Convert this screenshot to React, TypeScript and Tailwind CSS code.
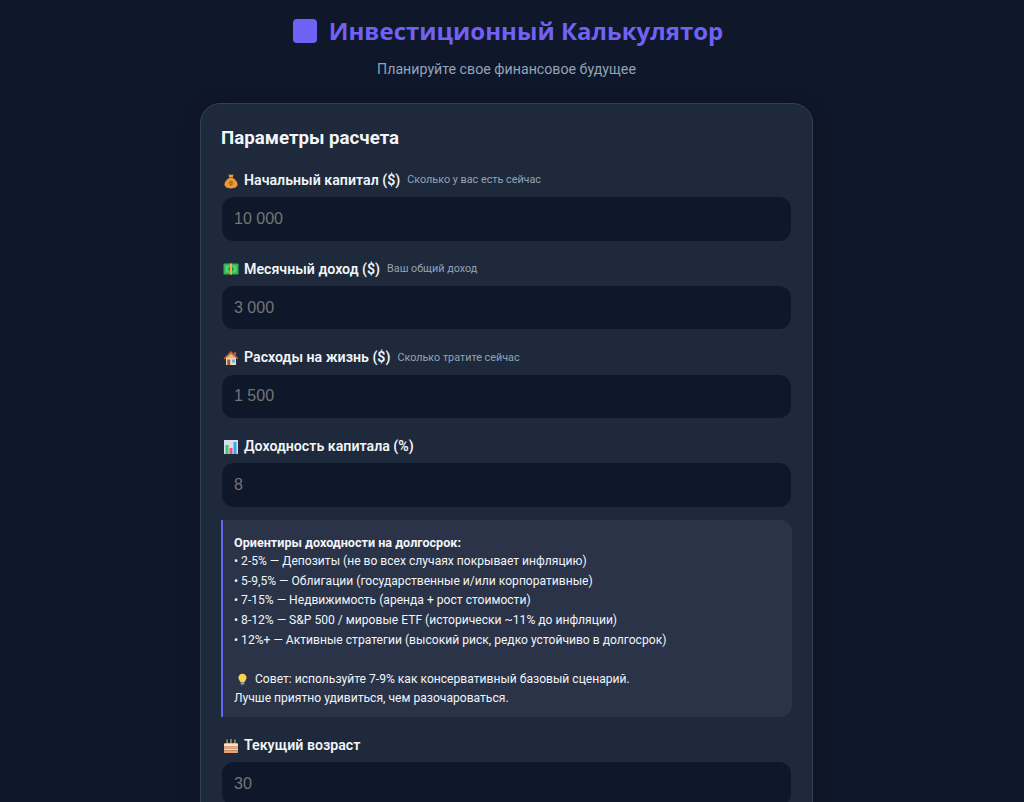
import type { ReactNode } from 'react'

function MoneyBag() {
  return (
    <svg viewBox="0 0 16 16" className="w-4 h-4 shrink-0">
      <path d="M5.5 1 L7 2.2 L8 1.2 L9 2.2 L10.5 1 L9.8 4.4 H6.2 Z" fill="#f0a23a" />
      <rect x="6" y="4" width="4" height="1.2" rx="0.5" fill="#a8601c" />
      <path d="M6.2 5 C3.5 6.6 1.5 9 1.5 11.3 C1.5 14.2 4.4 15.4 8 15.4 C11.6 15.4 14.5 14.2 14.5 11.3 C14.5 9 12.5 6.6 9.8 5 Z" fill="#ee9a34" />
      <rect x="7.4" y="7.5" width="1.2" height="5.5" rx="0.6" fill="#a8601c" />
      <ellipse cx="8" cy="10.2" rx="1.9" ry="1.7" fill="none" stroke="#a8601c" strokeWidth="0.8" />
    </svg>
  )
}

function Banknote() {
  return (
    <svg viewBox="0 0 16 16" className="w-4 h-4 shrink-0">
      <rect x="0.5" y="2.5" width="15" height="11" rx="0.8" fill="#2fb457" />
      <rect x="2.5" y="4.5" width="11" height="7" fill="#5ccf74" />
      <circle cx="8" cy="8" r="2.8" fill="#1f9a48" />
      <rect x="7" y="2.5" width="2" height="11" fill="#f2b632" />
    </svg>
  )
}

function House() {
  return (
    <svg viewBox="0 0 16 16" className="w-4 h-4 shrink-0">
      <rect x="11" y="2" width="2" height="4" fill="#a5573c" />
      <rect x="3" y="7" width="10" height="8" fill="#f3d9b4" />
      <path d="M8 1 L15.5 8.5 L14 9.2 L8 3.6 L2 9.2 L0.5 8.5 Z" fill="#c8643c" />
      <path d="M8 3.6 L13 8.3 H3 Z" fill="#e9b98b" />
      <rect x="4.2" y="9.5" width="3" height="5.5" fill="#9a5a35" />
      <rect x="9" y="9.5" width="3" height="3" fill="#58b6e8" />
    </svg>
  )
}

function BarChart() {
  return (
    <svg viewBox="0 0 16 16" className="w-4 h-4 shrink-0">
      <rect x="1" y="1" width="14" height="14" fill="#d9e0e8" />
      <rect x="2.5" y="6" width="3" height="9" fill="#43c46e" />
      <rect x="6.5" y="9" width="3" height="6" fill="#ef4c8d" />
      <rect x="10.5" y="3" width="3" height="12" fill="#3aa7e8" />
    </svg>
  )
}

function Cake() {
  return (
    <svg viewBox="0 0 16 16" className="w-4 h-4 shrink-0">
      <rect x="3.6" y="1.5" width="1" height="4" fill="#e9c46a" />
      <rect x="7.5" y="1" width="1" height="4.5" fill="#e9c46a" />
      <rect x="11.4" y="1.5" width="1" height="4" fill="#e9c46a" />
      <rect x="1" y="5.2" width="14" height="3.4" rx="1" fill="#fbe3c8" />
      <rect x="1" y="8.2" width="14" height="2.6" fill="#f2a97a" />
      <rect x="1" y="10.8" width="14" height="1.4" fill="#fbd9b8" />
      <rect x="1" y="12.2" width="14" height="2.8" rx="0.6" fill="#ef9f70" />
    </svg>
  )
}

function Bulb() {
  return (
    <svg viewBox="0 0 16 16" className="w-[13px] h-[13px] shrink-0">
      <path d="M8 1 C4.9 1 3 3.2 3 5.8 C3 8.3 5 9.2 5.6 11.5 H10.4 C11 9.2 13 8.3 13 5.8 C13 3.2 11.1 1 8 1 Z" fill="#fbd34d" />
      <rect x="5.8" y="11.5" width="4.4" height="2.5" fill="#9aa5b4" />
      <rect x="6.6" y="14" width="2.8" height="1.4" rx="0.6" fill="#6b7686" />
    </svg>
  )
}

function Field({ icon, label, hint, placeholder }: { icon: ReactNode; label: string; hint?: string; placeholder: string }) {
  return (
    <div className="mb-[19.3px]">
      <label className="flex items-center h-[19px] mb-[7px] pl-[2px] text-[14.2px] font-semibold text-[#f1f5f9]">
        {icon}
        <span className="ml-[5px]">{label}</span>
        {hint && <span className="ml-[7px] text-[10.8px] font-normal text-[#94a3b8]">{hint}</span>}
      </label>
      <input
        placeholder={placeholder}
        className="block mx-px w-[calc(100%-2px)] h-[43.5px] px-3 rounded-xl bg-[#0f172a] text-base outline-none placeholder:text-[#757575] font-['Liberation_Sans',sans-serif]"
      />
    </div>
  )
}

export default function App() {
  return (
    <div className="h-[802px] overflow-hidden bg-[#0f172a] font-['Roboto','Open_Sans',sans-serif]">
      <div className="w-[1013px]">
        <header className="pt-[14px] text-center">
          <h1 className="flex items-center justify-center h-[34px] ml-[3px] text-2xl font-bold text-[#7161f5] font-['Open_Sans',sans-serif]">
            <span className="w-6 h-6 mr-3 rounded-[4px] bg-[#6c63f5]" />
            Инвестиционный Калькулятор
          </h1>
          <p className="mt-[11px] text-[14.2px] leading-5 text-[#94a3b8]">Планируйте свое финансовое будущее</p>
        </header>

        <main className="mx-auto mt-[24px] w-[613px] rounded-[20px] border border-[#334155] bg-[#1e293b] pt-[22px] px-5 shadow-[0_4px_24px_rgba(0,0,0,0.2)]">
          <h2 className="h-[24px] mb-[21px] text-[18.7px] leading-6 font-bold text-[#f1f5f9]">Параметры расчета</h2>

          <Field icon={<MoneyBag />} label="Начальный капитал ($)" hint="Сколько у вас есть сейчас" placeholder="10 000" />
          <Field icon={<Banknote />} label="Месячный доход ($)" hint="Ваш общий доход" placeholder="3 000" />
          <Field icon={<House />} label="Расходы на жизнь ($)" hint="Сколько тратите сейчас" placeholder="1 500" />
          <Field icon={<BarChart />} label="Доходность капитала (%)" placeholder="8" />

          <div className="-mt-[6.5px] mb-[19.4px] rounded-xl rounded-l-none border-l-2 border-[#6366f1] bg-[#2a3347] pt-[13px] pb-2 pl-[11px] pr-3 text-[12.1px] leading-[19.6px] text-[#f1f5f9]">
            <div className="font-bold text-[12.6px]">Ориентиры доходности на долгосрок:</div>
            <div>• 2-5% — Депозиты (не во всех случаях покрывает инфляцию)</div>
            <div>• 5-9,5% — Облигации (государственные и/или корпоративные)</div>
            <div>• 7-15% — Недвижимость (аренда + рост стоимости)</div>
            <div>• 8-12% — S&amp;P 500 / мировые ETF (исторически ~11% до инфляции)</div>
            <div>• 12%+ — Активные стратегии (высокий риск, редко устойчиво в долгосрок)</div>
            <div className="h-[19.6px]" />
            <div className="flex items-center">
              <span className="ml-[2px] mr-[6px]"><Bulb /></span>
              Совет: используйте 7-9% как консервативный базовый сценарий.
            </div>
            <div>Лучше приятно удивиться, чем разочароваться.</div>
          </div>

          <Field icon={<Cake />} label="Текущий возраст" placeholder="30" />
        </main>
      </div>
    </div>
  )
}
